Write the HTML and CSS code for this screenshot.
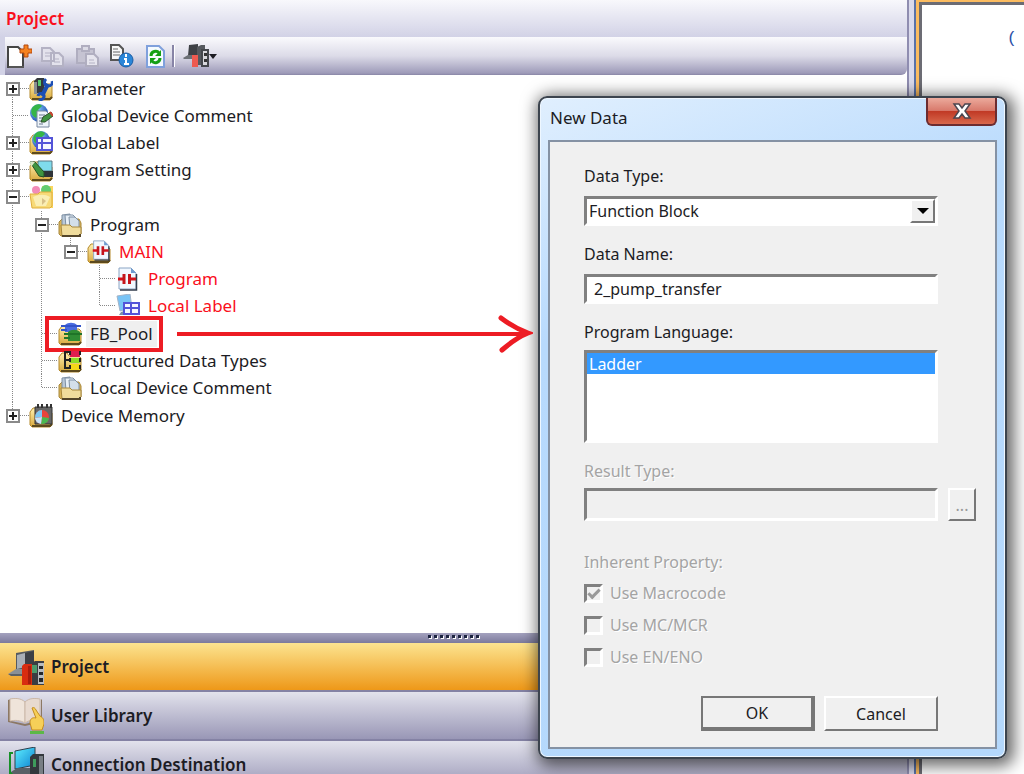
FILE: index.html
```
<!DOCTYPE html>
<html lang="en">
	<head>
		<meta charset="utf-8">
		<title>Project</title>
		<link rel="stylesheet" href="styles.css">
	</head>
	<body>
		<!-- shared shapes for the tree icons -->
		<svg class="defs" width="0" height="0">
			<defs>
				<linearGradient id="gold" x1="0" y1="0" x2="0" y2="1">
					<stop offset="0" stop-color="#fff0b0"/>
					<stop offset="1" stop-color="#d9a93c"/>
				</linearGradient>
				<radialGradient id="globe" cx=".35" cy=".3" r=".8">
					<stop offset="0" stop-color="#8fd4ff"/>
					<stop offset="1" stop-color="#1240a8"/>
				</radialGradient>
				<linearGradient id="screen" x1="0" y1="0" x2="1" y2="1">
					<stop offset="0" stop-color="#5ff0ff"/>
					<stop offset="1" stop-color="#0b7fd0"/>
				</linearGradient>
				<symbol id="folder" viewBox="0 0 24 24">
					<path d="M1 8l3-4h5l2 3h10l2 2v12l-2 2H3l-2-2z" fill="url(#gold)" stroke="#b58a2c"/>
					<path d="M3 22h18l2-2" fill="none" stroke="#5d4a1c" stroke-width="2"/>
				</symbol>
				<symbol id="papers" viewBox="0 0 24 24">
					<path d="M1 9l3-3h17l2 4v11l-2 2H3l-2-2z" fill="#d9b458" stroke="#a8883c"/>
					<path d="M4 2l8-1v13H4z" fill="#b9c8d8" stroke="#7e90a4"/>
					<path d="M7 2h8l3 3v10H8z" fill="#e8f0f8" stroke="#7e90a4"/>
					<path d="M11 4h6l4 4v8h-9z" fill="#d3dfea" stroke="#7e90a4"/>
					<path d="M3 12h9l2 2h9v7l-2 2H4z" fill="#f0dc9c" stroke="#a8883c"/>
					<path d="M4 23h18v-2" fill="none" stroke="#54462a" stroke-width="2"/>
				</symbol>
				<symbol id="ladderdoc" viewBox="0 0 24 24">
					<path d="M3 1h12l5 5v16H3z" fill="#f2f8ff" stroke="#8aa4c4"/>
					<path d="M15 1v5h5z" fill="#6f9bd0"/>
					<path d="M4 23h16.500V7" fill="none" stroke="#333c4c" stroke-width="1.500"/>
					<path d="M2 12h6M14 12h6" stroke="#d4141c" stroke-width="3"/>
					<path d="M8 7v10M13.500 7v10" stroke="#c4141c" stroke-width="3"/>
				</symbol>
				<symbol id="plc" viewBox="0 0 36 36">
					<path d="M8 4l18-3v18l-18 3z" fill="#555a60"/>
					<path d="M9 6l8-2v14l-8 2z" fill="#a9afb6"/>
					<path d="M17 4l9-2v14l-9 2z" fill="#3c4046"/>
					<path d="M0 25l8-5h10v5z" fill="#8b9096"/>
					<path d="M0 25h16v2H3z" fill="#5d6166"/>
					<path d="M24 14l3-2h9v24H23z" fill="#3a3d42"/>
					<path d="M30 14h6v21h-6z" fill="#b8bcc0"/>
					<path d="M31 17h4v3h-4zM31 23h4v3h-4zM31 29h4v4h-4z" fill="#24272b"/>
					<path d="M24 16h5v8h-5z" fill="#4c9a6a"/>
					<path d="M14 17l2-2h8v21H14z" fill="#d82c10"/>
					<path d="M20 17h3v18h-3z" fill="#a81c0c"/>
				</symbol>
			</defs>
		</svg>

		<div class="app">
			<div class="project">
				<h1 class="title">Project</h1>
				<div class="toolbar">
					<button type="button" title="New Data">
						<svg width="26" height="26" viewBox="0 0 26 26">
							<path d="M2 4h10l5 5v15H2z" fill="#fff" stroke="#454545" stroke-width="2"/>
							<path d="M3 24h15" stroke="#555" stroke-width="2"/>
							<path d="M18 2h4v4h4v4h-4v4h-4v-4h-4V6h4z" fill="#f58220" stroke="#b5480c"/>
						</svg>
					</button>
					<button type="button" title="Copy" disabled>
						<svg width="26" height="26" viewBox="0 0 26 26">
							<path d="M2 5h8l4 4v9H2zM11 10h8l4 4v9H11z" fill="#e3e2ec" stroke="#b4b2c4" stroke-width="2"/>
							<path d="M5 10h5M5 13h5M14 16h5M14 19h6" stroke="#b4b2c4"/>
						</svg>
					</button>
					<button type="button" title="Paste" disabled>
						<svg width="26" height="26" viewBox="0 0 26 26">
							<path d="M3 6h17v14H3z" fill="#c5c3d2" stroke="#b0aec0" stroke-width="2"/>
							<path d="M8 3h7v5H8z" fill="#dcdbe6" stroke="#b0aec0" stroke-width="2"/>
							<path d="M12 11h8l4 4v8H12z" fill="#e6e5ee" stroke="#b0aec0" stroke-width="2"/>
							<path d="M15 17h5M15 20h6" stroke="#b4b2c4"/>
						</svg>
					</button>
					<button type="button" title="Property">
						<svg width="26" height="26" viewBox="0 0 26 26">
							<path d="M3 2h8l4 4v11H3z" fill="#f8f8f8" stroke="#555" stroke-width="2"/>
							<path d="M5 6h5M5 9h7M5 12h7" stroke="#666"/>
							<circle cx="18" cy="17" r="7" fill="#2b86d8" stroke="#1a5ca4"/>
							<path d="M18 11v3M16 16h2v5M16 21h5" fill="none" stroke="#fff" stroke-width="2"/>
						</svg>
					</button>
					<button type="button" title="Refresh">
						<svg width="26" height="26" viewBox="0 0 26 26">
							<path d="M5 3h12l5 5v16H5z" fill="#f4faff" stroke="#7fa0dc" stroke-width="2"/>
							<path d="M9 13c0-5 6-6 8-3" fill="none" stroke="#14a014" stroke-width="3"/>
							<path d="M19 7v6h-6z" fill="#14a014"/>
							<path d="M18 15c0 5-6 6-8 3" fill="none" stroke="#14a014" stroke-width="3"/>
							<path d="M8 21v-6h6z" fill="#14a014"/>
						</svg>
					</button>
					<span class="separator"></span>
					<button type="button" title="View">
						<svg width="34" height="26" viewBox="0 0 34 26">
							<path d="M6 2l9-1v12H5z" fill="#3e4146"/>
							<path d="M0 15l5-3h9v4H1z" fill="#6c7076"/>
							<path d="M14 4l4-2h4v20h-8z" fill="#55595e"/>
							<path d="M19 7h6v16h-6z" fill="#d8d8dc" stroke="#44474c" stroke-width="2"/>
							<path d="M21 10h3v3h-3zM21 16h3v3h-3z" fill="#333"/>
							<path d="M9 12h6v12H9z" fill="#ee5a50"/>
							<path d="M26 11h8l-4 5z" fill="#1c1c22"/>
						</svg>
					</button>
				</div>

				<ul class="tree">
					<li>
						<div class="row"><span class="box plus"></span><span class="dots"></span>
							<svg class="icon" viewBox="0 0 24 24">
								<use href="#folder"/>
								<path d="M5 4l3-3h7v15H5z" fill="#34383c"/>
								<path d="M9 3h3v6H9z" fill="#59c86c"/>
								<path d="M5 5h3v12H5z" fill="#8a8f92"/>
								<path d="M13 19l6-12" stroke="#1c4fb4" stroke-width="4"/>
								<path d="M17 2c-3 3-1 7 2 7s5-2 4-5M9 19c1-4 7-3 6 1-1 3-4 3-5 2" fill="none" stroke="#1c4fb4" stroke-width="3"/>
							</svg>
							<a href="#">Parameter</a></div>
					</li>
					<li>
						<div class="row"><span class="dots leaf"></span>
							<svg class="icon" viewBox="0 0 24 24">
								<circle cx="10" cy="9" r="9" fill="url(#globe)"/>
								<path d="M3 4c4-5 9-4 10-2l-4 4 3 3-5 5C3 12 1 9 3 4z" fill="#35b548"/>
								<path d="M8 7h9l3 3v13H8z" fill="#eef4fa" stroke="#7888a0"/>
								<path d="M10 11h6M10 14h6M10 17h6M10 20h4" stroke="#66748a"/>
								<path d="M12 18l2-5 8-5 2 4-8 6z" fill="#3f9440" stroke="#2c5028"/>
								<path d="M21 8l3 4" stroke="#d04030" stroke-width="2"/>
							</svg>
							<a href="#">Global Device Comment</a></div>
					</li>
					<li>
						<div class="row"><span class="box plus"></span><span class="dots"></span>
							<svg class="icon" viewBox="0 0 24 24">
								<use href="#folder"/>
								<circle cx="12" cy="9" r="9" fill="url(#globe)"/>
								<path d="M6 3c4-4 9-3 10 0l-4 4-4 6C4 11 3 7 6 3z" fill="#35b548"/>
								<path d="M8 7h15v12H8z" fill="#f4f6ff" stroke="#5354d8" stroke-width="2"/>
								<path d="M8 12h15M13 7v12" stroke="#5354d8" stroke-width="2"/>
							</svg>
							<a href="#">Global Label</a></div>
					</li>
					<li>
						<div class="row"><span class="box plus"></span><span class="dots"></span>
							<svg class="icon" viewBox="0 0 24 24">
								<use href="#folder"/>
								<path d="M9 3h14v10H9z" fill="#7fdcec" stroke="#5c7884"/>
								<path d="M8 13h16v6H12z" fill="#2e3338"/>
								<path d="M1 4l5 0 9 10 0 5-5-1z" fill="#3f9440" stroke="#245024"/>
								<path d="M1 4l5 0-4 5z" fill="#d8e8c8"/>
							</svg>
							<a href="#">Program Setting</a></div>
					</li>
					<li>
						<div class="row"><span class="box"></span><span class="dots"></span>
							<svg class="icon" viewBox="0 0 24 24">
								<path d="M13 1h11v22H4l9-14z" fill="#fbd65e"/>
								<circle cx="7" cy="5" r="4" fill="#f28cb8"/>
								<circle cx="17" cy="5" r="5" fill="#63cc70"/>
								<path d="M1 9h8l2-2h12v14l-2 2H3z" fill="#f7da78" stroke="#dfae3c"/>
								<path d="M4 12c6-3 12-3 17 0l-4 9H7z" fill="#faeeb4"/>
								<path d="M13 13l4 3-4 4z" fill="#d8c088"/>
							</svg>
							<a href="#">POU</a></div>
						<ul>
							<li>
								<div class="row"><span class="box"></span><span class="dots"></span>
									<svg class="icon" viewBox="0 0 24 24"><use href="#papers"/></svg>
									<a href="#">Program</a></div>
								<ul>
									<li>
										<div class="row edited"><span class="box"></span><span class="dots"></span>
											<svg class="icon" viewBox="0 0 24 24">
												<use href="#folder"/>
												<use href="#ladderdoc" x="4" y="0" width="21" height="21"/>
											</svg>
											<a href="#">MAIN</a></div>
										<ul>
											<li>
												<div class="row edited"><span class="dots leaf"></span>
													<svg class="icon" viewBox="0 0 24 24"><use href="#ladderdoc"/></svg>
													<a href="#">Program</a></div>
											</li>
											<li>
												<div class="row edited"><span class="dots leaf"></span>
													<svg class="icon" viewBox="0 0 24 24">
														<path d="M1 2l13-2 2 14-12 3z" fill="#79c4f6" stroke="#a4b4c8"/>
														<path d="M5 18l9-3v6H3z" fill="#7c8fa8"/>
														<path d="M8 9h15v11H8z" fill="#f4f6ff" stroke="#5354d8" stroke-width="2"/>
														<path d="M8 14h15M15 9v11" stroke="#5354d8" stroke-width="2"/>
													</svg>
													<a href="#">Local Label</a></div>
											</li>
										</ul>
									</li>
								</ul>
							</li>
							<li>
								<div class="row marked"><span class="dots leaf"></span>
									<svg class="icon" viewBox="0 0 24 24">
										<use href="#folder"/>
										<path d="M7 3c3-3 9-3 12 0v7H7z" fill="#4a6ce0"/>
										<path d="M3 4h20M3 8h6" stroke="#3454c8" stroke-width="2"/>
										<path d="M10 10c3-3 9-3 12 0v9H10z" fill="#2f8c34"/>
										<path d="M6 12h18M6 16h6" stroke="#1f7428" stroke-width="2"/>
									</svg>
									<a href="#">FB_Pool</a>
									<svg class="arrow" width="356" height="38" viewBox="0 0 356 38">
										<path d="M0 19h350" stroke="#ed1c24" stroke-width="4"/>
										<path d="M324 3c8 6 16 11 27 15-10 4-18 10-26 17" fill="none" stroke="#ed1c24" stroke-width="5" stroke-linecap="round"/>
									</svg>
								</div>
							</li>
							<li>
								<div class="row"><span class="dots leaf"></span>
									<svg class="icon" viewBox="0 0 24 24">
										<use href="#folder"/>
										<path d="M12 2h10v6H12z" fill="#e01c50"/>
										<path d="M12 9h10v5H12z" fill="#8edc28"/>
										<path d="M12 15h10v6H12z" fill="#f4d818"/>
										<path d="M12 3H7v16h5M7 11h5" fill="none" stroke="#222" stroke-width="2"/>
										<path d="M12 2v4M12 9v4M12 16v4M22 2v4M22 9v4M22 16v4" stroke="#222" stroke-width="2"/>
									</svg>
									<a href="#">Structured Data Types</a></div>
							</li>
							<li>
								<div class="row"><span class="dots leaf"></span>
									<svg class="icon" viewBox="0 0 24 24"><use href="#papers"/></svg>
									<a href="#">Local Device Comment</a></div>
							</li>
						</ul>
					</li>
					<li>
						<div class="row"><span class="box plus"></span><span class="dots"></span>
							<svg class="icon" viewBox="0 0 24 24">
								<use href="#folder"/>
								<path d="M6 3h17v17H6z" fill="#666" stroke="#333"/>
								<path d="M9 0v4M13 0v4M18 0v4M22 0v4" stroke="#333" stroke-width="2"/>
								<circle cx="13" cy="13" r="7" fill="#e8443c"/>
								<path d="M13 13V6a7 7 0 0 0-7 8z" fill="#7cc8f4"/>
								<path d="M13 13l7 1a7 7 0 0 1-8 6z" fill="#48b850"/>
								<path d="M13 13l-7 1a7 7 0 0 0 6 6z" fill="#c8e4fa"/>
							</svg>
							<a href="#">Device Memory</a></div>
					</li>
				</ul>

				<div class="splitter">
					<i></i><i></i><i></i><i></i><i></i><i></i><i></i><i></i><i></i>
				</div>

				<div class="views">
					<button type="button" class="view active">
						<svg width="36" height="36" viewBox="0 0 36 36"><use href="#plc"/></svg>
						Project
					</button>
					<button type="button" class="view">
						<svg width="36" height="36" viewBox="0 0 36 36">
							<path d="M0 2l3-1v22l14 3 16-4V1l1 1v22l-17 4-17-4z" fill="#8c7864"/>
							<path d="M2 1c5-1 11-1 15 3v21C12 22 7 22 2 23z" fill="#efe4da" stroke="#cbb8a8"/>
							<path d="M17 4c4-4 10-4 15-3v21c-5-1-11 0-15 3z" fill="#e8dad0" stroke="#cbb8a8"/>
							<path d="M24 10c2-1 3 0 4 2l4 6c4 2 4 5 4 8l-2 6H24l-2-7c0-4 2-6 6-5z" fill="#f6cf58" stroke="#c48c20"/>
							<path d="M22 33h14v3H22z" fill="#5cb848"/>
						</svg>
						User Library
					</button>
					<button type="button" class="view">
						<svg width="36" height="36" viewBox="0 0 36 36">
							<path d="M5 6H2v20h6" fill="none" stroke="#169028" stroke-width="2"/>
							<path d="M7 4l20-4v18L7 22z" fill="url(#screen)" stroke="#30404c"/>
							<path d="M22 10l3-3h11v22H22z" fill="#33383d"/>
							<path d="M31 9h4v18h-4z" fill="#787e84"/>
							<path d="M25 12h3v8h-3z" fill="#3e9c5c"/>
							<path d="M3 25l6-4h13v6H5z" fill="#596066"/>
						</svg>
						Connection Destination
					</button>
				</div>
			</div>

			<div class="editor">
				<div class="sheet">(</div>
			</div>
		</div>

		<form class="dialog" onsubmit="return false">
			<div class="caption">
				<h2>New Data</h2>
				<button type="button" class="close" title="Close">
					<svg width="20" height="18" viewBox="0 0 20 18">
						<path d="M2 2h5l3 4 3-4h5l-5 7 5 7h-5l-3-4-3 4H2l5-7z" fill="#fff" stroke="#4c4650" stroke-width="1.500"/>
					</svg>
				</button>
			</div>
			<div class="fields">
				<label for="dataType">Data Type:</label>
				<div class="combo">
					<select id="dataType"><option>Function Block</option></select>
					<span class="drop"></span>
				</div>

				<label class="next" for="dataName">Data Name:</label>
				<input class="text" id="dataName" type="text" value="2_pump_transfer">

				<label class="next" for="language">Program Language:</label>
				<select class="list" id="language" size="4"><option selected>Ladder</option></select>

				<label class="next off" for="resultType">Result Type:</label>
				<div class="result">
					<input class="text" id="resultType" type="text" disabled>
					<button type="button" class="push more" disabled>...</button>
				</div>

				<fieldset disabled>
					<legend>Inherent Property:</legend>
					<label><input type="checkbox" checked>Use Macrocode</label>
					<label><input type="checkbox">Use MC/MCR</label>
					<label><input type="checkbox">Use EN/ENO</label>
				</fieldset>

				<div class="buttons">
					<button type="submit" class="push default">OK</button>
					<button type="button" class="push">Cancel</button>
				</div>
			</div>
		</form>
	</body>
</html>
```
FILE: styles.css
```
*, *::before, *::after{
	box-sizing: border-box;
}
body{
	margin: 0;
	height: 100vh;
	overflow: hidden;
	position: relative;
	font-family: "Noto Sans", sans-serif;
	font-size: 17px;
	color: #1c1c24;
	background: #fff;
}
button, input, select{
	font: inherit;
	color: inherit;
}
a{
	color: inherit;
	text-decoration: none;
}
.defs{
	position: absolute;
}
.app{
	display: flex;
	height: 100%;
}

/* project pane */
.project{
	flex: 1;
	min-width: 0;
	display: flex;
	flex-direction: column;
	border-right: 2px solid #8f8db0;
}
.title{
	margin: 0;
	padding: 0 6px;
	font-size: 17px;
	line-height: 37px;
	font-weight: 600;
	color: #fa0f1c;
	background: linear-gradient(#f8f8fc, #d2d2e6);
}
.toolbar{
	display: flex;
	align-items: center;
	gap: 8px;
	height: 38px;
	padding-left: 1px;
	background: linear-gradient(#fafafd, #dcdbe8 50%, #9e9bb9 95%, #8986a6);
	border-left: 5px solid #d2d2e6;
	border-radius: 0 0 6px 0;
}
.toolbar button{
	display: flex;
	padding: 0;
	border: 0;
	background: none;
}
.separator{
	width: 3px;
	height: 22px;
	margin-left: -4px;
	background: #8784a6;
	border-right: 1px solid #fff;
}

/* tree */
.tree{
	flex: 1;
	min-height: 0;
}
.tree, .tree ul{
	margin: 0;
	padding: 0;
	list-style: none;
}
.tree ul{
	padding: 1px 0 1px 29px;
}
.tree ul ul{
	padding-top: 0;
}
.tree ul ul ul{
	padding-bottom: 0;
}
.tree li{
	background: repeating-linear-gradient(#888 0 1px, #fff 1px 2px) 12px 0 / 1px 100% no-repeat;
}
.tree li:last-child{
	background-size: 1px 14px;
}
.tree > li:first-child{
	background-position: 12px 14px;
}
.row{
	display: flex;
	align-items: center;
	height: 27px;
	padding-left: 6px;
	position: relative;
}
.row a{
	padding: 0 4px;
	line-height: 26px;
	white-space: nowrap;
}
.box{
	width: 14px;
	height: 14px;
	border: 2px solid #8a8a8a;
	background: linear-gradient(#222, #222) center / 8px 2px no-repeat #fff;
}
.plus{
	background: linear-gradient(#222, #222) center / 8px 2px no-repeat, linear-gradient(#222, #222) center / 2px 8px no-repeat #fff;
}
.dots{
	width: 9px;
	height: 1px;
	background: repeating-linear-gradient(90deg, #888 0 1px, #fff 1px 2px);
}
.leaf{
	width: 16px;
	margin-left: 7px;
}
.icon{
	width: 24px;
	height: 24px;
	margin-right: 4px;
}
.edited{
	color: #fa0f1c;
}
.marked a{
	background: #efefef;
}
.marked::after{
	content: "";
	position: absolute;
	left: 16px;
	top: -4px;
	width: 118px;
	height: 36px;
	border: 4px solid #ed1c24;
}
.arrow{
	position: absolute;
	left: 148px;
	top: -5px;
	z-index: 3;
}

/* view switcher */
.splitter{
	display: flex;
	justify-content: center;
	gap: 3px;
	height: 10px;
	padding-top: 2px;
	background: linear-gradient(#a4a2bf, #7c7a9c);
}
.splitter i{
	width: 3px;
	height: 3px;
	background: #1c2440;
	box-shadow: 1px 1px #fff;
}
.views{
	height: 131px;
	overflow: hidden;
}
.view{
	display: flex;
	align-items: center;
	gap: 7px;
	width: 100%;
	height: 49px;
	padding: 0 8px;
	border: 0;
	border-bottom: 2px solid #8482a4;
	background: linear-gradient(#e2e2ec, #9997b6);
	font-weight: 600;
	line-height: 18px;
}
.active{
	background: linear-gradient(#fce490, #ee9818);
}

/* editor at the right */
.editor{
	width: 115px;
	padding: 2px 0 0 10px;
	background: #dadaec;
}
.sheet{
	height: 100%;
	padding: 24px 7px;
	text-align: right;
	font-family: "Liberation Mono", monospace;
	color: #2c50a8;
	background: #fff;
	border: 3px solid #6c6c74;
	border-width: 3px 0 0 3px;
	box-shadow: 0 0 0 3px #fcbc60, 0 0 0 5px #5a72a8;
}

/* New Data dialog */
.dialog{
	position: absolute;
	top: 96px;
	right: 17px;
	width: 469px;
	padding: 0 8px 8px;
	font-size: 16px;
	border: 2px solid #3c444e;
	border-radius: 9px;
	background: linear-gradient(160deg, #e0effe, #b8dafd 30%, #b4d8fc);
	box-shadow: inset 0 0 0 1px #eef7ff, 3px 3px 16px 4px rgba(0, 0, 0, .6);
}
.caption{
	display: flex;
	justify-content: space-between;
	align-items: flex-start;
	height: 42px;
}
.caption h2{
	margin: 0;
	padding-left: 2px;
	font-size: 17px;
	font-weight: 400;
	line-height: 40px;
}
.close{
	display: flex;
	justify-content: center;
	align-items: center;
	width: 71px;
	height: 28px;
	border: 2px solid #6c2c30;
	border-top: 0;
	border-radius: 0 0 6px 6px;
	background: linear-gradient(#ecaa9c, #d87a6c 48%, #c03824 50%, #d8684c);
}
.fields{
	display: flex;
	flex-direction: column;
	padding: 24px 57px 16px 34px;
	border: 2px solid #8592a4;
	background: #f0f0f0;
}
.fields label, legend{
	line-height: 20px;
}
.fields .next{
	margin-top: 18px;
}
.fields .off, fieldset{
	color: #a4a4a4;
	text-shadow: 1px 1px #fff;
}
.combo, .text, .list{
	border: 3px solid;
	border-color: #808080 #fff #fff #808080;
	background: #fff;
}
.combo{
	position: relative;
	height: 30px;
	margin-top: 10px;
}
.combo select{
	appearance: none;
	width: 100%;
	height: 100%;
	padding: 0 2px;
	border: 0;
	background: none;
}
.drop{
	position: absolute;
	top: 0;
	right: 0;
	bottom: 0;
	width: 25px;
	display: grid;
	place-items: center;
	pointer-events: none;
	border: 2px solid;
	border-color: #fff #777 #777 #fff;
	background: #f0f0f0;
}
.drop::before{
	content: "";
	border: 6px solid transparent;
	border-top-color: #000;
	border-bottom: 0;
}
.text{
	width: 100%;
	height: 30px;
	margin-top: 10px;
	padding: 0 7px;
}
.list{
	height: 93px;
	margin-top: 8px;
	padding: 0;
	overflow: hidden;
	border-radius: 0;
}
.list option{
	display: flex;
	align-items: center;
	height: 21px;
	min-height: 0;
	padding: 0 2px;
}
.list option:checked{
	color: #fff;
	background: linear-gradient(#3399ff, #3399ff);
}
.result{
	display: flex;
	gap: 10px;
	height: 33px;
	margin-top: 7px;
	margin-right: -38px;
}
.result .text{
	flex: 1;
	height: 33px;
	margin: 0;
	background: #f0f0f0;
}
fieldset{
	display: flex;
	flex-direction: column;
	gap: 12px;
	margin: 31px 0 0;
	padding: 0;
	border: 0;
}
legend{
	padding: 0;
	margin-bottom: 11px;
}
fieldset label{
	display: flex;
	align-items: center;
	gap: 7px;
}
fieldset input{
	appearance: none;
	width: 19px;
	height: 19px;
	margin: 0;
	border: 3px solid;
	border-color: #808080 #fff #fff #808080;
}
fieldset input:checked{
	display: grid;
	justify-items: center;
}
fieldset input:checked::before{
	content: "";
	width: 12px;
	height: 7px;
	margin-top: 2px;
	border: solid #999;
	border-width: 0 0 3px 3px;
	rotate: -45deg;
}
.buttons{
	display: flex;
	justify-content: flex-end;
	gap: 9px;
	margin-top: 29px;
}
.push{
	width: 114px;
	height: 35px;
	padding: 0;
	border: 2px solid;
	border-color: #fff #777 #777 #fff;
	background: #f0f0f0;
}
.default{
	border-color: #777;
	border-width: 2px 4px 4px 2px;
}
.more{
	width: 28px;
	height: 33px;
	color: #999;
}
```
